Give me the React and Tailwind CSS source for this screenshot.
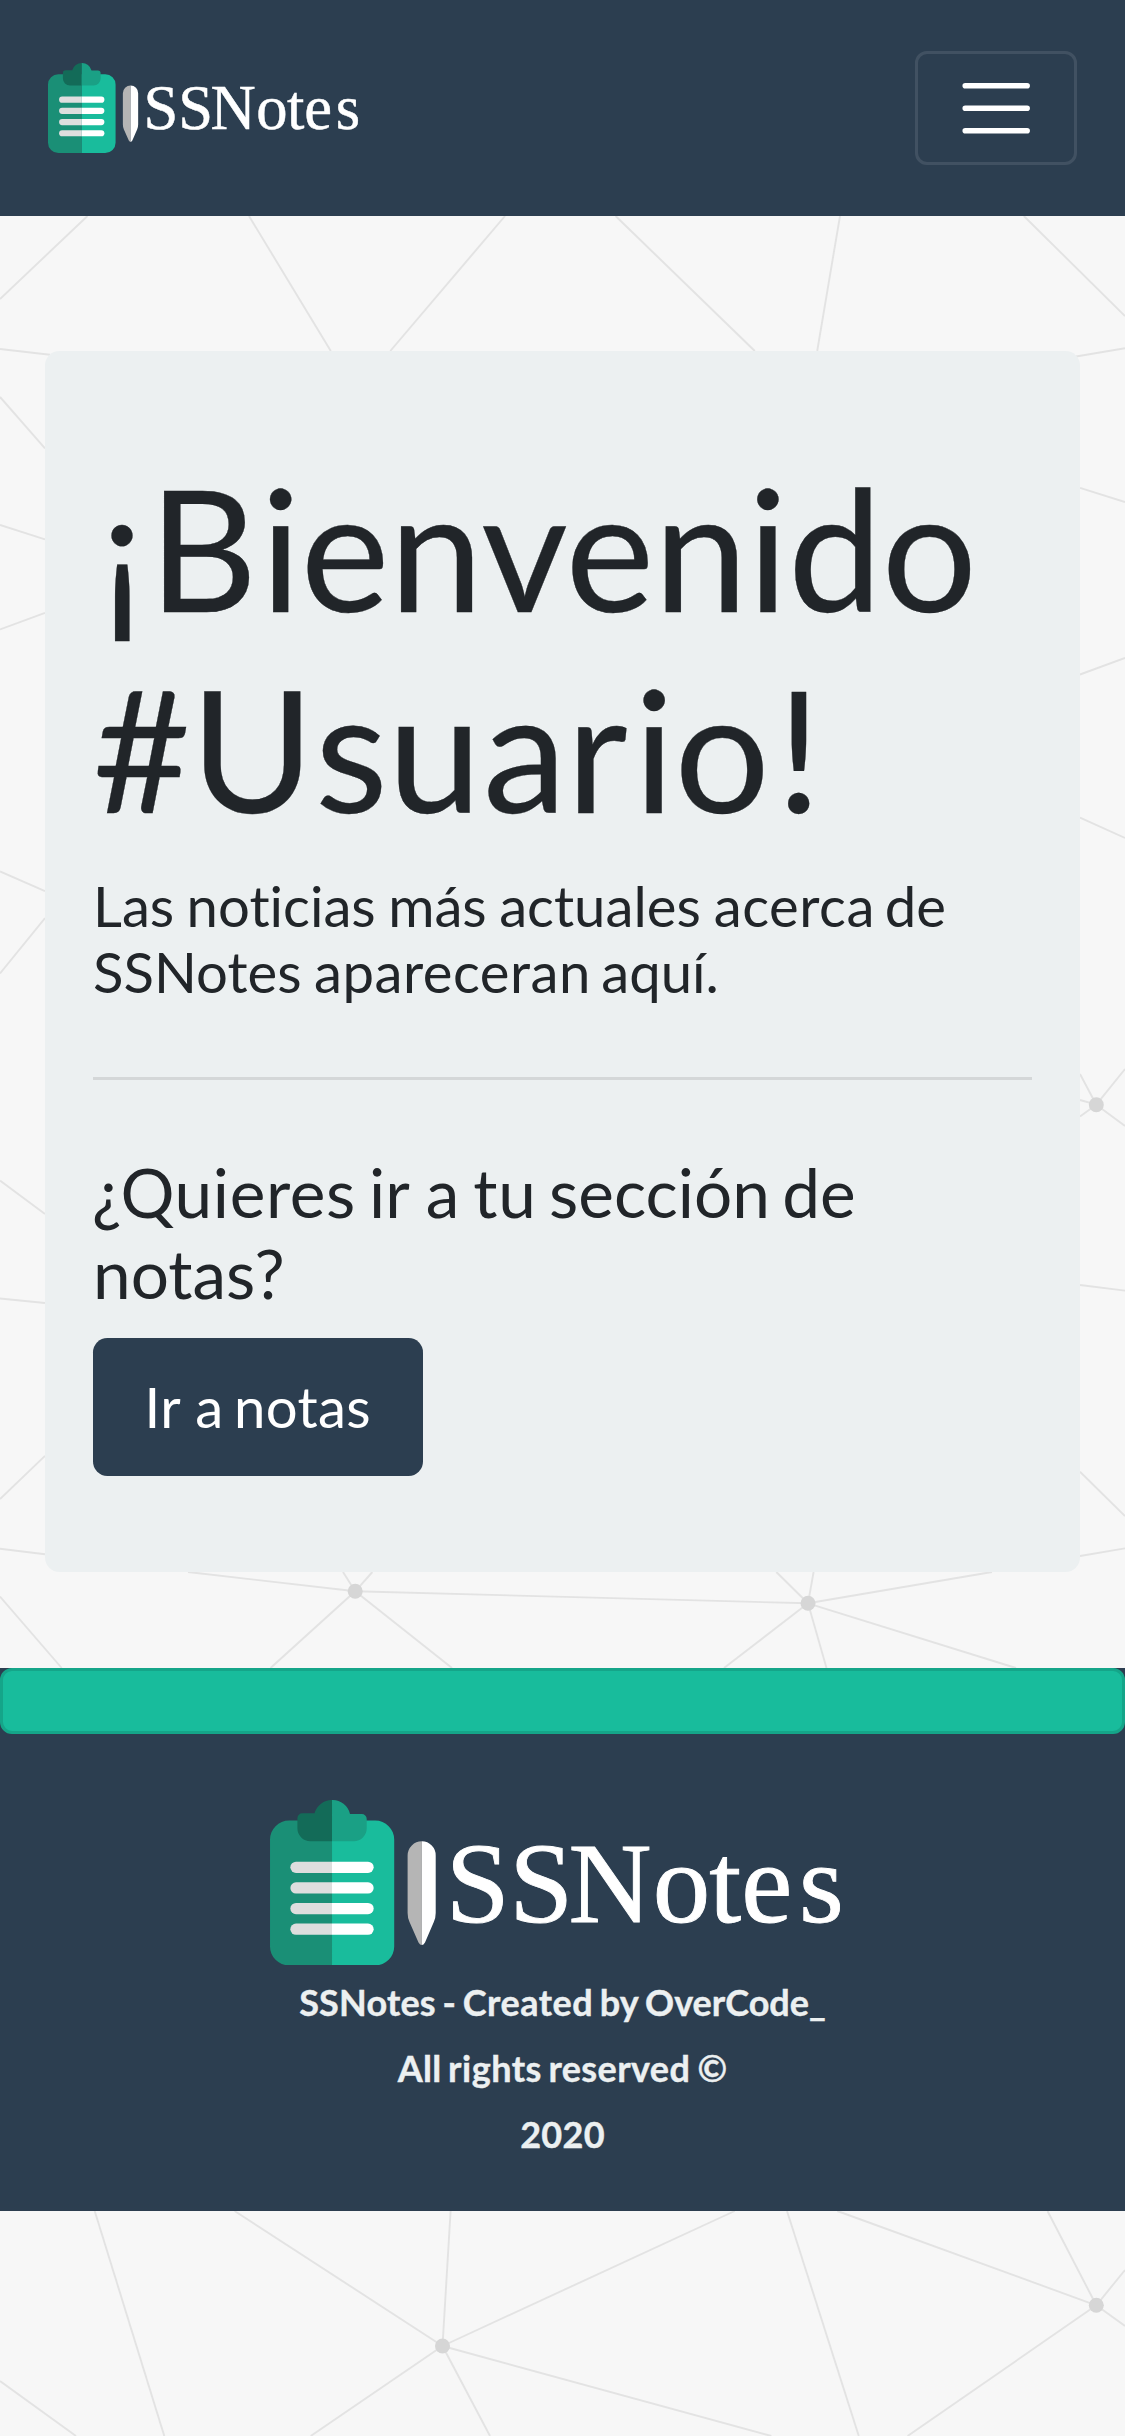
const LINES = [
  [87.5, 216, 0, 299], [249, 216, 330.8, 351], [505, 216, 390.3, 351], [615.6, 216, 754.8, 351],
  [840, 216, 817.2, 351], [1023.8, 216, 1125, 316], [0, 349, 50, 354.7], [1076, 356.5, 1125, 348.3],
  [0, 397, 45, 448.3], [0, 525, 45, 539.3], [0, 629.4, 45, 612.8], [0, 871.4, 45, 891.2],
  [0, 973.5, 45, 918.1], [0, 1180.6, 45, 1213.9], [0, 1298.5, 45, 1303], [0, 1499, 45, 1455.9],
  [0, 1548.7, 45, 1554.3], [1080, 487.9, 1125, 502], [1080, 674.5, 1125, 658], [1080, 817.7, 1125, 838],
  [1080, 1074, 1096.3, 1104.7], [1080, 1100, 1096.3, 1104.7], [1080, 1116.6, 1096.3, 1104.7],
  [1125, 1069, 1096.3, 1104.7], [1125, 1126, 1096.3, 1104.7], [1080, 1285, 1125, 1290.6],
  [1080, 1471.7, 1125, 1516], [1080, 1556, 1125, 1548.4],
  [188, 1572, 355.2, 1591.3], [343, 1572, 355.2, 1591.3], [372.4, 1572, 355.2, 1591.3],
  [355.2, 1591.3, 808, 1603.3], [776.3, 1572, 808, 1603.3], [813.6, 1572, 808, 1603.3],
  [992, 1572, 808, 1603.3], [355.2, 1591.3, 270.5, 1668], [355.2, 1591.3, 452, 1668],
  [808, 1603.3, 724, 1668], [808, 1603.3, 826.5, 1668], [808, 1603.3, 1016, 1668], [0, 1596.5, 61.7, 1668],
  [94.7, 2211, 164.3, 2436], [234.6, 2211, 442.5, 2346], [450.6, 2211, 442.5, 2346],
  [734.7, 2211, 442.5, 2346], [442.5, 2346, 310.7, 2436], [442.5, 2346, 490, 2436],
  [442.5, 2346, 771.3, 2436], [0, 2381, 76, 2436], [787, 2211, 858.8, 2436],
  [837.3, 2211, 1096.3, 2305.3], [1047.5, 2211, 1096.3, 2305.3], [1096.3, 2305.3, 1125, 2270],
  [1096.3, 2305.3, 1125, 2326], [1096.3, 2305.3, 907.6, 2436],
];

const NODES = [[1096.3, 1104.7], [355.2, 1591.3], [808, 1603.3], [442.5, 2346], [1096.3, 2305.3]];

function NetworkPattern() {
  return (
    <svg className="absolute inset-0 -z-10 h-[2436px] w-[1125px]" viewBox="0 0 1125 2436" aria-hidden="true">
      <g stroke="#e3e3e3" strokeWidth="1.9">
        {LINES.map(([x1, y1, x2, y2], i) => (
          <line key={i} x1={x1} y1={y1} x2={x2} y2={y2} />
        ))}
      </g>
      {NODES.map(([cx, cy], i) => (
        <circle key={i} cx={cx} cy={cy} r="7.5" fill="#d6d6d6" />
      ))}
    </svg>
  );
}

function Logo({ className }) {
  return (
    <svg className={className} viewBox="0 0 576 165.4" role="img" aria-label="SSNotes">
      <path d="M62 20.6H19A19 19 0 0 0 0 39.6V146.4A19 19 0 0 0 19 165.4H62Z" fill="#1a8f76" />
      <path d="M62 20.6H105.2A19 19 0 0 1 124.2 39.6V146.4A19 19 0 0 1 105.2 165.4H62Z" fill="#19bc9c" />
      <path d="M62 0A18 18 0 0 0 44.5 13.2H32.4A5 5 0 0 0 27.4 18.2V28.3A13 13 0 0 0 40.4 41.3H62Z" fill="#136b58" />
      <path d="M62 0A18 18 0 0 1 80 14H91.7A5 5 0 0 1 96.7 19V28.3A13 13 0 0 1 83.7 41.3H62Z" fill="#1aa085" />
      {[61.7, 82.3, 102.9, 123.5].map((y) => (
        <g key={y}>
          <path d={`M62 ${y}H26A5.65 5.65 0 0 0 26 ${y + 11.3}H62Z`} fill="#dedede" />
          <path d={`M62 ${y}H98A5.65 5.65 0 0 1 98 ${y + 11.3}H62Z`} fill="#fff" />
        </g>
      ))}
      <path d="M151.9 41.3A14.2 14.2 0 0 0 137.6 55.5V113Q137.6 118 139.5 122L148.5 142.5Q150 145 151.9 145Z" fill="#b5b5b5" />
      <path d="M151.9 41.3A14 14 0 0 1 165.7 55.5V113Q165.7 118 163.8 122L155 142.5Q153.5 145 151.9 145Z" fill="#fff" />
      <text
        x="175.7 239.2 298.6 382.7 439.2 471.2 529"
        y="122"
        fontSize="115"
        fill="#fff"
        stroke="#fff"
        strokeWidth="0.9"
        fontFamily="'Liberation Serif', serif"
      >
        SSNotes
      </text>
    </svg>
  );
}

export default function App() {
  return (
    <div className="relative isolate min-h-[2436px] w-[1125px] overflow-hidden bg-[#f7f7f7] font-['Lato',sans-serif] text-[#212529] [font-variant-ligatures:none]">
      <NetworkPattern />

      <nav className="flex h-[216px] items-center justify-between bg-[#2c3e50] px-12">
        <Logo className="h-[90px] w-[313.4px]" />
        <button
          className="flex h-[114px] w-[162px] items-center justify-center rounded-xl border-3 border-white/10"
          aria-label="Menu"
        >
          <svg
            className="size-[84.375px]"
            viewBox="0 0 30 30"
            fill="none"
            stroke="#fff"
            strokeWidth="2"
            strokeLinecap="round"
          >
            <path d="M4 7h22M4 15h22M4 23h22" />
          </svg>
        </button>
      </nav>

      <main className="mx-[45px] mt-[135px] h-[1221px] rounded-[14.4px] bg-[#ecf0f1] px-12 py-24">
        <h1 className="mb-[23px] text-[168px] leading-[201px] whitespace-nowrap [-webkit-text-stroke:0.3px]">
          <span className="mr-[5.5px] ml-[8px]">¡</span>
          <span className="mr-[3px]">B</span>
          <span className="tracking-[-0.1px]">ienvenido</span>
          <br />
          <span className="mr-[1px]">#U</span>
          <span className="mr-[1.5px]">su</span>
          <span>a</span>
          <span className="mr-[6.5px]">r</span>
          <span className="mr-[6.5px]">io</span>
          <span>!</span>
        </h1>
        <h5 className="text-[56.25px] leading-[66px]">
          Las <span className="ml-[-2px]">noticias</span> <span className="ml-[-2px]">más</span>{' '}
          <span className="ml-[-2px]">actuales</span>{' '}
          <span className="ml-[-1.5px] tracking-[0.5px]">acerca</span> <span className="ml-[-4.5px]">de</span>
          <br />
          SSNotes <span className="ml-[-2px] tracking-[0.5px]">apareceran</span>{' '}
          <span className="ml-[-4px]">aquí.</span>
        </h5>
        <hr className="mt-[73px] mb-[71px] border-t-3 border-black/10" />
        <h4 className="mb-[25px] text-[67.5px] leading-[81px]">
          <span className="ml-[-1px] tracking-[0.6px]">¿Quieres</span> <span className="ml-[-4px]">ir</span>{' '}
          <span>a</span> <span className="ml-[-3.2px] tracking-[0.8px]">tu</span>{' '}
          <span className="ml-[-5px]">sección</span> <span className="ml-[-5px]">de</span>
          <br />
          notas?
        </h4>
        <button className="block h-[138px] w-[330px] rounded-[14.4px] bg-[#2c3e50] pb-[3px] pl-[51.5px] text-left text-[56.25px] leading-[84px] text-white">
          <span className="tracking-[0.3px]">Ir</span> a <span className="ml-[-3.8px] tracking-[0.4px]">notas</span>
        </button>
      </main>

      <footer className="mt-24 flex h-[543px] flex-col items-center bg-[#2c3e50]">
        <div className="h-[66px] w-full rounded-xl border-3 border-[#15a589] bg-[#18bc9c]" />
        <Logo className="mt-[66px] mr-[9.4px] h-[165.4px] w-[576px]" />
        <div className="mt-[4px] text-center text-[36px] leading-[66px] font-bold text-[#ecf0f1] [-webkit-text-stroke:0.4px]">
          <p>
            <span className="tracking-[0.2px]">SSNotes</span> <span className="ml-[-2px]">-</span>{' '}
            <span className="ml-[-2px] tracking-[0.5px]">Created</span>{' '}
            <span className="ml-[-2px]">by</span> <span className="ml-[-1.5px]">OverCode_</span>
          </p>
          <p>
            <span className="tracking-[0.2px]">All</span>{' '}
            <span className="ml-[-2px] tracking-[0.5px]">rights</span>{' '}
            <span className="ml-[-2.3px] tracking-[0.4px]">reserved</span> <span className="ml-[-1.6px]">©</span>
          </p>
          <p className="tracking-[0.3px]">2020</p>
        </div>
      </footer>
    </div>
  );
}
